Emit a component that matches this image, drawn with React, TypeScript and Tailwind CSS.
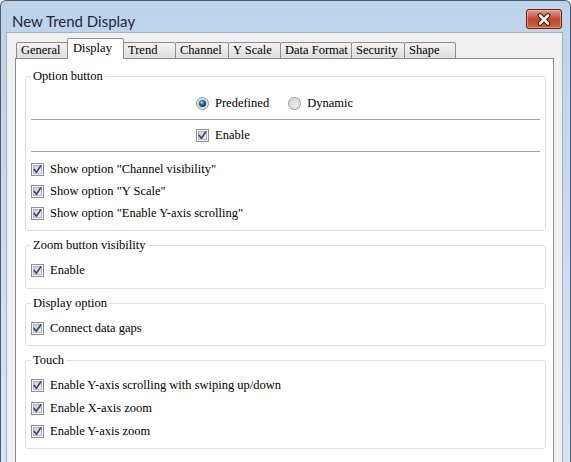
import React from 'react'

const tabs = [
  { label: 'General', cls: 'w-[52px]' },
  { label: 'Display', cls: 'w-[57px]', active: true },
  { label: 'Trend', cls: 'w-[53px]' },
  { label: 'Channel', cls: 'w-[54px]' },
  { label: 'Y Scale', cls: 'w-[53px]' },
  { label: 'Data Format', cls: 'w-[72px]' },
  { label: 'Security', cls: 'w-[54px]' },
  { label: 'Shape', cls: 'w-[52px]' },
]

function CheckBox() {
  return (
    <svg width="13" height="13" viewBox="0 0 13 13" className="shrink-0">
      <defs>
        <linearGradient id="cbfill" x1="0" y1="0" x2="1" y2="1">
          <stop offset="0" stopColor="#c9ccd6" />
          <stop offset="1" stopColor="#f4f4f8" />
        </linearGradient>
      </defs>
      <rect x="0.5" y="0.5" width="12" height="12" fill="#f7f7f7" stroke="#8e8f8f" />
      <rect x="2.5" y="2.5" width="8" height="8" fill="url(#cbfill)" stroke="#b1b5c0" />
      <path d="M3.2 6.4 L5.4 9.2 L9.8 2.8" fill="none" stroke="#34467a" strokeWidth="1.6" strokeLinecap="round" strokeLinejoin="round" />
    </svg>
  )
}

function Radio({ checked }: { checked?: boolean }) {
  return (
    <svg width="13" height="13" viewBox="0 0 13 13" className="shrink-0">
      <defs>
        <linearGradient id="rdfill" x1="0" y1="0" x2="1" y2="1">
          <stop offset="0" stopColor="#d2d2d2" />
          <stop offset="1" stopColor="#f8f8f8" />
        </linearGradient>
        <radialGradient id="rddot" cx="0.4" cy="0.35" r="0.7">
          <stop offset="0" stopColor="#a8e2f8" />
          <stop offset="0.45" stopColor="#1f6d98" />
          <stop offset="1" stopColor="#0b2f4a" />
        </radialGradient>
      </defs>
      <circle cx="6.5" cy="6.5" r="6" fill="#f4f4f4" stroke="#8e8f8f" />
      <circle cx="6.5" cy="6.5" r="4.5" fill="url(#rdfill)" stroke="#c4c4c4" strokeWidth="0.8" />
      {checked && <circle cx="6.5" cy="6.5" r="3.6" fill="url(#rddot)" />}
    </svg>
  )
}

function CheckRow({ label, tall }: { label: string; tall?: boolean }) {
  return (
    <div className={tall ? 'flex h-[23px] items-center gap-[6px]' : 'flex h-[22px] items-center gap-[6px]'}>
      <CheckBox />
      <span>{label}</span>
    </div>
  )
}

function Group({ title, children, className }: { title: string; children: React.ReactNode; className?: string }) {
  return (
    <fieldset className={'rounded-[3px] border border-[#d5dfe5] px-[5px] ' + (className ?? '')}>
      <legend className="px-[2px] leading-[14px]">{title}</legend>
      {children}
    </fieldset>
  )
}

export default function App() {
  return (
    <div className="flex h-[462px] w-[571px] flex-col overflow-hidden rounded-t-[6px] border border-b-0 border-[#4e5d6e] bg-gradient-to-b from-[#bdd3ea] via-[#c9dcef] to-[#d6e5f4] [font-family:'Liberation_Serif','Times_New_Roman',serif]">
      {/* title bar */}
      <div className="flex h-[31px] shrink-0 items-start justify-between">
        <span className="mt-[10px] pl-[11px] text-[15px] leading-[20px] text-[#1c2838] [font-family:Lato,sans-serif]">
          New Trend Display
        </span>
        <div className="mr-[8px] mt-[8px] flex h-[20px] w-[36px] items-center justify-center rounded-[3px] border border-[#5e2218] bg-gradient-to-b from-[#e39d8a] via-[#c4472d] to-[#d0622f] shadow-[inset_0_0_0_1px_rgba(255,220,210,0.45)]">
          <svg width="16" height="13" viewBox="0 0 16 13">
            <path d="M4 2.5 L12 10.5 M12 2.5 L4 10.5" stroke="#3f120a" strokeWidth="4.6" strokeLinecap="round" />
            <path d="M4 2.5 L12 10.5 M12 2.5 L4 10.5" stroke="#ffffff" strokeWidth="2.6" strokeLinecap="round" />
          </svg>
        </div>
      </div>

      {/* client area */}
      <div className="ml-[5px] mr-[7px] flex flex-1 flex-col border border-b-0 border-[#9fb2c6] bg-[#f0f0f0] px-[8px] pt-[5px] text-[12.5px] text-black">
        {/* tabs */}
        <div className="relative z-10 -mb-px ml-px flex h-[21px] items-end">
          {tabs.map((t, i) =>
            t.active ? (
              <div
                key={t.label}
                className={t.cls + ' -ml-px h-[21px] shrink-0 rounded-t-[2px] border border-b-0 border-[#898c95] bg-white pl-[5px] pt-[1px] leading-[16px]'}
              >
                {t.label}
              </div>
            ) : (
              <div
                key={t.label}
                className={
                  t.cls +
                  (i === 0 ? '' : ' -ml-px') +
                  ' h-[17px] shrink-0 rounded-t-[2px] border border-[#898c95] bg-gradient-to-b from-[#f3f3f3] to-[#dcdcdc] pl-[4px] leading-[15px]'
                }
              >
                {t.label}
              </div>
            )
          )}
        </div>

        {/* tab panel */}
        <div className="flex h-[420px] shrink-0 flex-col gap-[7px] border border-[#898c95] bg-white pl-[9px] pr-[7px] pt-[10px]">
          <Group title="Option button" className="pb-[6px]">
            <div className="mt-[9px] flex h-[22px] items-center pl-[165px]">
              <Radio checked />
              <span className="ml-[6px]">Predefined</span>
              <span className="ml-[19px]">
                <Radio />
              </span>
              <span className="ml-[6px]">Dynamic</span>
            </div>
            <div className="mt-[5px] h-px bg-[#a3a3a3]" />
            <div className="mt-[4px] flex h-[22px] items-center gap-[6px] pl-[165px]">
              <CheckBox />
              <span>Enable</span>
            </div>
            <div className="mt-[5px] h-px bg-[#a3a3a3]" />
            <div className="mt-[6px]">
              <CheckRow label={'Show option "Channel visibility"'} />
              <CheckRow label={'Show option "Y Scale"'} />
              <CheckRow label={'Show option "Enable Y-axis scrolling"'} />
            </div>
          </Group>

          <Group title="Zoom button visibility" className="pb-[7px]">
            <div className="mt-[7px]">
              <CheckRow label="Enable" />
            </div>
          </Group>

          <Group title="Display option" className="pb-[6px]">
            <div className="mt-[7px]">
              <CheckRow label="Connect data gaps" />
            </div>
          </Group>

          <Group title="Touch" className="pb-[5px]">
            <div className="mt-[7px]">
              <CheckRow tall label="Enable Y-axis scrolling with swiping up/down" />
              <CheckRow tall label="Enable X-axis zoom" />
              <CheckRow tall label="Enable Y-axis zoom" />
            </div>
          </Group>
        </div>
      </div>
    </div>
  )
}
